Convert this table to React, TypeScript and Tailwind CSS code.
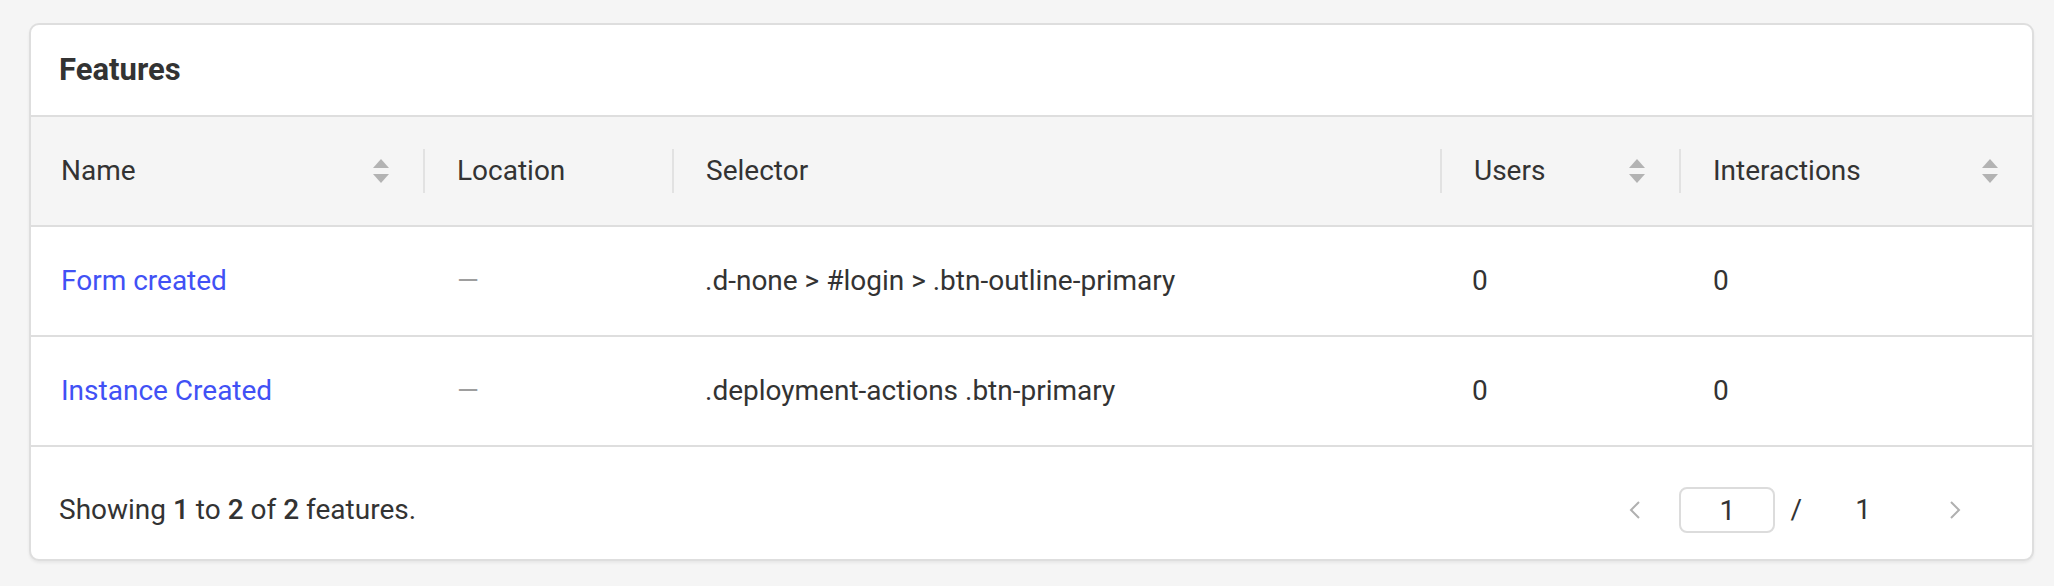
import React from "react";

const cols = "grid grid-cols-[392px_249px_768px_239px_1fr]";

function SortIcon() {
  return (
    <svg width="16" height="25" viewBox="0 0 16 25" className="shrink-0">
      <path d="M8 0 L16 9 L0 9 Z" fill="#b3b3b3" />
      <path d="M0 15 L16 15 L8 24 Z" fill="#b3b3b3" />
    </svg>
  );
}

function Chevron({ dir }: { dir: "left" | "right" }) {
  return (
    <svg width="12" height="18" viewBox="0 0 12 18">
      <polyline
        points={dir === "left" ? "10,1 2,9 10,17" : "2,1 10,9 2,17"}
        fill="none"
        stroke="#b0b0b0"
        strokeWidth="2"
      />
    </svg>
  );
}

function HeadCell({
  label,
  sortable,
  divider,
}: {
  label: string;
  sortable?: boolean;
  divider?: boolean;
}) {
  return (
    <div className="flex items-center h-full">
      {divider && <span className="w-[2px] h-[44px] bg-[#e2e2e2] shrink-0" />}
      <div className={`flex items-center justify-between flex-1 pr-[34px] ${divider ? "pl-[32px]" : "pl-[30px]"}`}>
        <span>{label}</span>
        {sortable && <SortIcon />}
      </div>
    </div>
  );
}

const rows = [
  { name: "Form created", selector: ".d-none > #login > .btn-outline-primary", users: 0, interactions: 0 },
  { name: "Instance Created", selector: ".deployment-actions .btn-primary", users: 0, interactions: 0 },
];

export default function App() {
  return (
    <div className="min-h-[586px] bg-[#f5f5f5] pt-[23px] pl-[29px] [font-family:Roboto,sans-serif] text-[28px] text-[#333]">
      <div className="w-[2005px] bg-white border-2 border-[#dedede] rounded-[10px] overflow-hidden shadow-[0_2px_3px_rgba(0,0,0,0.06)]">
        <div className="h-[92px] flex items-center pl-[28px] border-b-2 border-[#dedede]">
          <h2 className="text-[31px] font-bold text-[#333]">Features</h2>
        </div>

        <div className={`${cols} h-[110px] bg-[#f5f5f5] border-b-2 border-[#dedede]`}>
          <HeadCell label="Name" sortable />
          <HeadCell label="Location" divider />
          <HeadCell label="Selector" divider />
          <HeadCell label="Users" sortable divider />
          <HeadCell label="Interactions" sortable divider />
        </div>

        {rows.map((r) => (
          <div key={r.name} className={`${cols} h-[110px] items-center border-b-2 border-[#dedede]`}>
            <div className="pl-[30px] text-[#4151f5]">{r.name}</div>
            <div className="pl-[34px] text-[#9e9e9e]">—</div>
            <div className="pl-[33px]">{r.selector}</div>
            <div className="pl-[32px]">{r.users}</div>
            <div className="pl-[34px]">{r.interactions}</div>
          </div>
        ))}

        <div className="h-[112px] pt-[14px] flex items-center justify-between pl-[28px] pr-[71px]">
          <p>
            Showing <span className="font-medium">1</span> to <span className="font-medium">2</span> of{" "}
            <span className="font-medium">2</span> features.
          </p>
          <div className="flex items-center">
            <Chevron dir="left" />
            <input
              readOnly
              value="1"
              className="ml-[38px] w-[96px] h-[46px] border-2 border-[#dcdcdc] rounded-[8px] text-center text-[28px] text-[#333] outline-none"
            />
            <span className="ml-[15px]">/</span>
            <span className="w-[96px] text-center ml-[13px]">1</span>
            <span className="ml-[38px] flex">
              <Chevron dir="right" />
            </span>
          </div>
        </div>
      </div>
    </div>
  );
}
